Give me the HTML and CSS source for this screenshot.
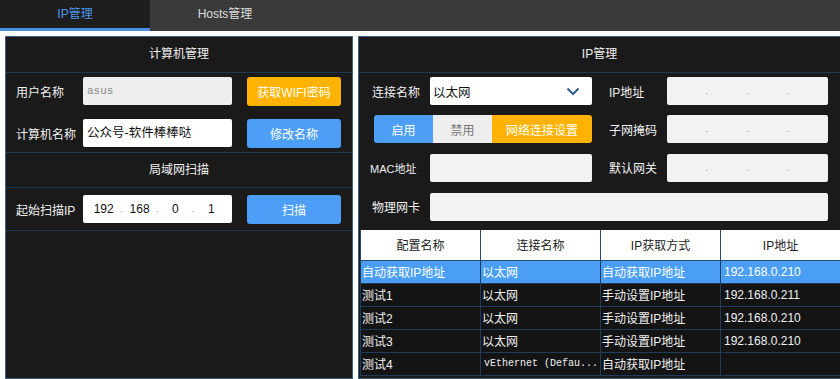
FILE: index.html
```html
<!DOCTYPE html>
<html lang="zh-CN">
<head>
    <meta charset="UTF-8">
    <meta name="viewport" content="width=device-width, initial-scale=1.0">
    <title>IP管理</title>
    <link rel="stylesheet" href="styles.css">
</head>
<body>
    <!-- Tabs -->
    <div class="tabs">
        <div class="tab active">IP管理</div>
        <div class="tab">Hosts管理</div>
    </div>

    <div class="main">
        <!-- Left: computer management -->
        <div class="panel left">
            <div class="panel-title">计算机管理</div>
            <div class="section form">
                <div class="row">
                    <span class="label">用户名称</span>
                    <div class="input disabled">asus</div>
                    <button class="btn orange">获取WIFI密码</button>
                </div>
                <div class="row">
                    <span class="label">计算机名称</span>
                    <div class="input name">公众号-软件棒棒哒</div>
                    <button class="btn blue">修改名称</button>
                </div>
            </div>
            <div class="panel-title sub">局域网扫描</div>
            <div class="section scan">
                <div class="row">
                    <span class="label">起始扫描IP</span>
                    <div class="input ip white">
                        <span>192</span><i>.</i><span>168</span><i>.</i><span>0</span><i>.</i><span>1</span>
                    </div>
                    <button class="btn blue">扫描</button>
                </div>
            </div>
        </div>

        <!-- Right: IP management -->
        <div class="panel right">
            <div class="panel-title">IP管理</div>
            <div class="ip-form">
                <span class="label">连接名称</span>
                <div class="select">
                    <span>以太网</span>
                    <svg width="14" height="9" viewBox="0 0 14 9"><path d="M1.5 1.5 L7 7 L12.5 1.5" fill="none" stroke="#2d5f8f" stroke-width="2"/></svg>
                </div>
                <span class="label gap">IP地址</span>
                <div class="input ip"><span></span><i>.</i><span></span><i>.</i><span></span><i>.</i><span></span></div>

                <div class="segment">
                    <button class="seg blue">启用</button>
                    <button class="seg gray">禁用</button>
                    <button class="seg orange">网络连接设置</button>
                </div>
                <span class="label gap">子网掩码</span>
                <div class="input ip"><span></span><i>.</i><span></span><i>.</i><span></span><i>.</i><span></span></div>

                <span class="label small">MAC地址</span>
                <div class="input"></div>
                <span class="label gap">默认网关</span>
                <div class="input ip"><span></span><i>.</i><span></span><i>.</i><span></span><i>.</i><span></span></div>

                <span class="label">物理网卡</span>
                <div class="input wide"></div>
            </div>

            <table class="grid">
                <thead>
                    <tr>
                        <th>配置名称</th>
                        <th>连接名称</th>
                        <th>IP获取方式</th>
                        <th>IP地址</th>
                    </tr>
                </thead>
                <tbody>
                    <tr class="selected">
                        <td>自动获取IP地址</td>
                        <td>以太网</td>
                        <td>自动获取IP地址</td>
                        <td class="num">192.168.0.210</td>
                    </tr>
                    <tr>
                        <td>测试1</td>
                        <td>以太网</td>
                        <td>手动设置IP地址</td>
                        <td class="num">192.168.0.211</td>
                    </tr>
                    <tr>
                        <td>测试2</td>
                        <td>以太网</td>
                        <td>手动设置IP地址</td>
                        <td class="num">192.168.0.210</td>
                    </tr>
                    <tr>
                        <td>测试3</td>
                        <td>以太网</td>
                        <td>手动设置IP地址</td>
                        <td class="num">192.168.0.210</td>
                    </tr>
                    <tr>
                        <td>测试4</td>
                        <td class="mono">vEthernet (Defau...</td>
                        <td>自动获取IP地址</td>
                        <td></td>
                    </tr>
                </tbody>
            </table>
        </div>
    </div>
</body>
</html>
```

FILE: styles.css
```css
/* Basic Reset */
* {
    box-sizing: border-box;
    margin: 0;
    padding: 0;
}

body {
    font-family: "Liberation Sans", "Noto Sans CJK SC", sans-serif;
    font-size: 12px;
    background-color: #fff;
    color: #eee;
    width: 840px;
    height: 379px;
    overflow: hidden;
}

/* Tabs */
.tabs {
    display: flex;
    height: 31px;
    background-color: #3a3a3a;
}

.tab {
    width: 150px;
    text-align: center;
    line-height: 28px;
    color: #ddd;
}

.tab.active {
    background-color: #1e1e1e;
    color: #4a95e8;
    border-bottom: 3px solid #4a8fe0;
}

/* Panels */
.main {
    display: flex;
    gap: 5px;
    padding: 5px 0 0 5px;
    height: 348px;
}

.panel {
    background-color: #1a1a1a;
    border: 1px solid #3e5f80;
    height: 100%;
}

.panel.left {
    width: 348px;
}

.panel.right {
    flex: 1;
    border-right: none;
}

.panel-title {
    height: 36px;
    line-height: 34px;
    text-align: center;
    color: #f0f0f0;
    border-bottom: 1px solid #1f3850;
}

.panel-title.sub {
    height: 35px;
}

.section {
    border-bottom: 1px solid #1f3850;
    padding: 4px 0 5px 10px;
}

.section.form {
    display: flex;
    flex-direction: column;
    gap: 14px;
}

.section.scan {
    padding: 7px 0 7px 10px;
}

.row {
    display: flex;
    align-items: center;
    height: 28px;
}

.label {
    color: #f0f0f0;
    white-space: nowrap;
}

.row .label {
    width: 67px;
}

.input {
    height: 28px;
    background-color: #f2f2f2;
    border-radius: 2px;
    color: #111;
}

.row .input {
    width: 149px;
    line-height: 28px;
    padding-left: 4px;
}

.input.disabled {
    background-color: #efefef;
    color: #8a8a8a;
    font-family: "Liberation Mono", monospace;
    font-size: 11px;
}

.input.name {
    background-color: #fff;
    font-size: 12.5px;
}

.input.white {
    background-color: #fff;
}

.input.ip {
    display: flex;
    align-items: center;
}

.row .input.ip {
    padding: 0 4px;
}

.input.ip span {
    flex: 1;
    text-align: center;
}

.input.ip i {
    font-style: normal;
    font-size: 9px;
    color: #888;
}

.btn {
    width: 94px;
    height: 29px;
    margin-left: 15px;
    border: none;
    border-radius: 3px;
    color: #fff;
    font-family: inherit;
    font-size: 12px;
}

.orange {
    background-color: #ffb300;
}

.blue {
    background-color: #4c9ef7;
}

/* Right form */
.ip-form {
    display: grid;
    grid-template-columns: 58px 162px 75px 161px;
    grid-template-rows: 28px 28px 29px 29px;
    row-gap: 10px;
    align-items: center;
    padding: 4px 0 9px 13px;
}

.label.gap {
    padding-left: 17px;
}

.label.small {
    font-size: 11px;
    margin-left: -2px;
}

.select {
    height: 28px;
    background-color: #fff;
    border-radius: 2px;
    display: flex;
    align-items: center;
    justify-content: space-between;
    padding: 0 12px 0 3px;
    color: #111;
    font-size: 12.5px;
}

.segment {
    grid-column: 1 / 3;
    display: flex;
    height: 28px;
    margin-left: 2px;
    border-radius: 3px;
    overflow: hidden;
}

.seg {
    border: none;
    color: #fff;
    font-family: inherit;
    font-size: 12px;
}

.seg.blue {
    width: 59px;
}

.seg.gray {
    width: 59px;
    background-color: #eeeeee;
    color: #777;
}

.seg.orange {
    flex: 1;
}

.input.wide {
    grid-column: 2 / 5;
}

/* Table */
.grid {
    width: 100%;
    border-collapse: collapse;
    table-layout: fixed;
    margin-left: 1px;
}

.grid th {
    height: 30px;
    background-color: #fff;
    color: #222;
    font-weight: normal;
    border: 1px solid #27496b;
    border-top: none;
}

.grid td {
    height: 23px;
    padding-left: 1px;
    color: #f0f0f0;
    background-color: #141414;
    border: 1px solid #1f3c5a;
    white-space: nowrap;
    overflow: hidden;
}

.grid tr.selected td {
    background-color: #4a9ff5;
    color: #fff;
}

.grid td.num {
    padding-left: 3px;
}

.grid td.mono {
    font-family: "Liberation Mono", monospace;
    font-size: 10px;
    padding-left: 3px;
}
```
